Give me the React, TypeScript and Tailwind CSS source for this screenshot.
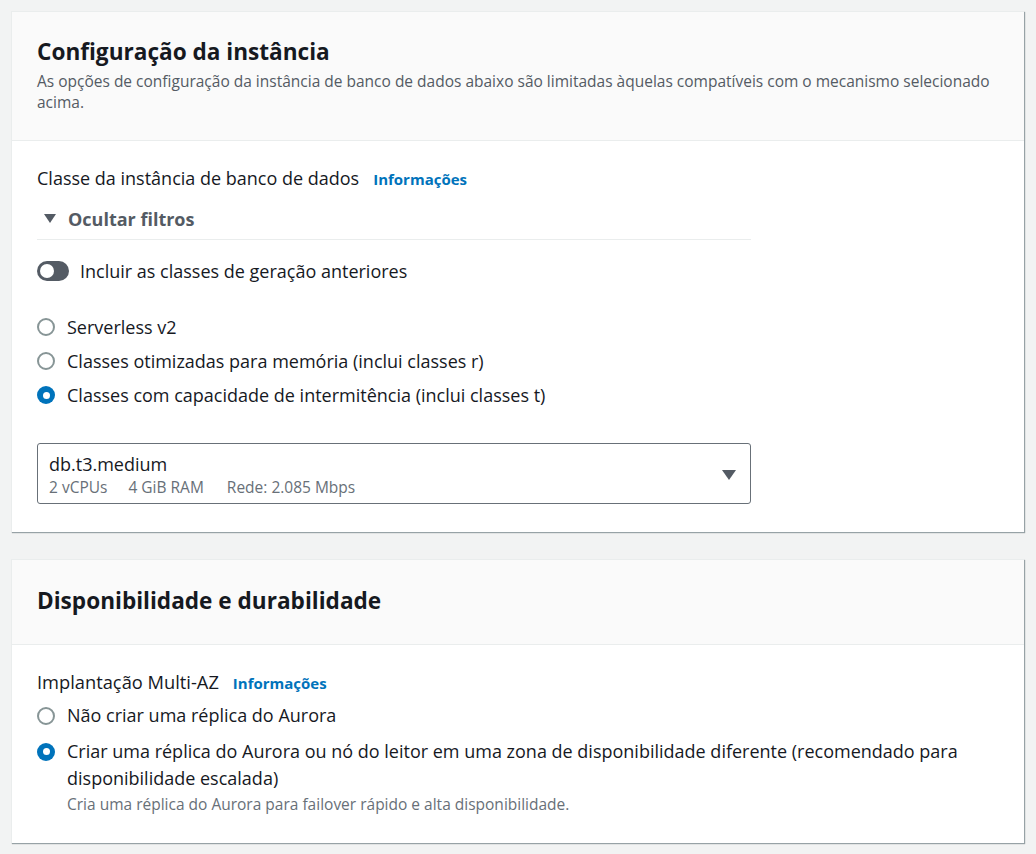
import React from "react";

const font = { fontFamily: '"Open Sans", "Noto Sans", sans-serif' };

function Radio({ checked }: { checked?: boolean }) {
  return checked ? (
    <span className="flex h-[18px] w-[18px] shrink-0 items-center justify-center rounded-full bg-[#0073bb]">
      <span className="h-[7px] w-[7px] rounded-full bg-white" />
    </span>
  ) : (
    <span className="h-[18px] w-[18px] shrink-0 rounded-full border-2 border-[#879596] bg-white" />
  );
}

function RadioRow({ checked, children, sub }: { checked?: boolean; children: React.ReactNode; sub?: string }) {
  return (
    <div className="flex items-start gap-[12px]">
      <div className="flex h-[27px] items-center">
        <Radio checked={checked} />
      </div>
      <div>
        <div className="text-[18px] leading-[27px] text-[#16191f]">{children}</div>
        {sub && <div className="mt-[2px] text-[15.5px] leading-[21px] text-[#687078]">{sub}</div>}
      </div>
    </div>
  );
}

const cardCls =
  "w-[1013px] bg-white border-t border-l border-[#eaeded] shadow-[1px_1px_1px_rgba(0,28,36,0.3),1px_1px_1px_rgba(0,28,36,0.1)]";

export default function App() {
  return (
    <div className="min-h-[854px] bg-[#f2f3f3] px-[11px] py-[11px]" style={font}>
      <div className="flex flex-col gap-[27px]">
        {/* Card 1 */}
        <div className={cardCls}>
          <div className="border-b border-[#eaeded] bg-[#fafafa] px-[25px] pt-[26px] pb-[27px]">
            <h2 className="text-[22.6px] font-bold leading-[28px] text-[#16191f]">Configuração da instância</h2>
            <p className="mt-[5px] text-[15.5px] leading-[21px] text-[#545b64]">
              As opções de configuração da instância de banco de dados abaixo são limitadas àquelas compatíveis com o mecanismo selecionado acima.
            </p>
          </div>
          <div className="px-[25px] pt-[25px] pb-[28px]">
            <div className="w-[714px]">
              <div className="flex items-baseline gap-[14px]">
                <span className="text-[18px] leading-[24px] text-[#16191f]">Classe da instância de banco de dados</span>
                <span className="text-[15px] font-bold text-[#0073bb]">Informações</span>
              </div>
              <div className="mt-[16px] flex items-center gap-[12px] border-b border-[#eaeded] pb-[8px] pl-[7px]">
                <svg width="12" height="10" viewBox="0 0 12 10">
                  <path d="M0 0 L12 0 L6 9 Z" fill="#545b64" />
                </svg>
                <span className="text-[18px] font-bold leading-[24px] text-[#545b64]">Ocultar filtros</span>
              </div>
              <div className="mt-[21px] flex items-center gap-[11px]">
                <span className="relative h-[20px] w-[32px] rounded-full bg-[#545b64]">
                  <span className="absolute left-[3px] top-[3px] h-[14px] w-[14px] rounded-full bg-white" />
                </span>
                <span className="text-[18px] leading-[20px] text-[#16191f]">Incluir as classes de geração anteriores</span>
              </div>
              <div className="mt-[33px] flex flex-col gap-[7px]">
                <RadioRow>Serverless v2</RadioRow>
                <RadioRow>Classes otimizadas para memória (inclui classes r)</RadioRow>
                <RadioRow checked>Classes com capacidade de intermitência (inclui classes t)</RadioRow>
              </div>
              <div className="mt-[34px] flex items-center justify-between rounded-[3px] border border-[#687078] pl-[11px] pr-[14px] pt-[8px] pb-[5px]">
                <div>
                  <div className="text-[18px] leading-[24px] text-[#16191f]">db.t3.medium</div>
                  <div className="flex gap-[21px] text-[15.5px] leading-[22px] text-[#687078]">
                    <span>2 vCPUs</span>
                    <span>4 GiB RAM</span>
                    <span className="ml-[2px]">Rede: 2.085 Mbps</span>
                  </div>
                </div>
                <svg width="14" height="10" viewBox="0 0 14 10">
                  <path d="M0 0 L14 0 L7 10 Z" fill="#545b64" />
                </svg>
              </div>
            </div>
          </div>
        </div>

        {/* Card 2 */}
        <div className={cardCls}>
          <div className="border-b border-[#eaeded] bg-[#fafafa] px-[25px] pt-[26px] pb-[28px]">
            <h2 className="text-[22.6px] font-bold leading-[30px] text-[#16191f]">Disponibilidade e durabilidade</h2>
          </div>
          <div className="px-[25px] pt-[25px] pb-[28px]">
            <div className="flex items-baseline gap-[14px]">
              <span className="text-[18.3px] leading-[24px] text-[#16191f]">Implantação Multi-AZ</span>
              <span className="text-[15px] font-bold text-[#0073bb]">Informações</span>
            </div>
            <div className="mt-[8px] flex flex-col gap-[9px]">
              <RadioRow>Não criar uma réplica do Aurora</RadioRow>
              <RadioRow checked sub="Cria uma réplica do Aurora para failover rápido e alta disponibilidade.">
                Criar uma réplica do Aurora ou nó do leitor em uma zona de disponibilidade diferente (recomendado para disponibilidade escalada)
              </RadioRow>
            </div>
          </div>
        </div>
      </div>
    </div>
  );
}
